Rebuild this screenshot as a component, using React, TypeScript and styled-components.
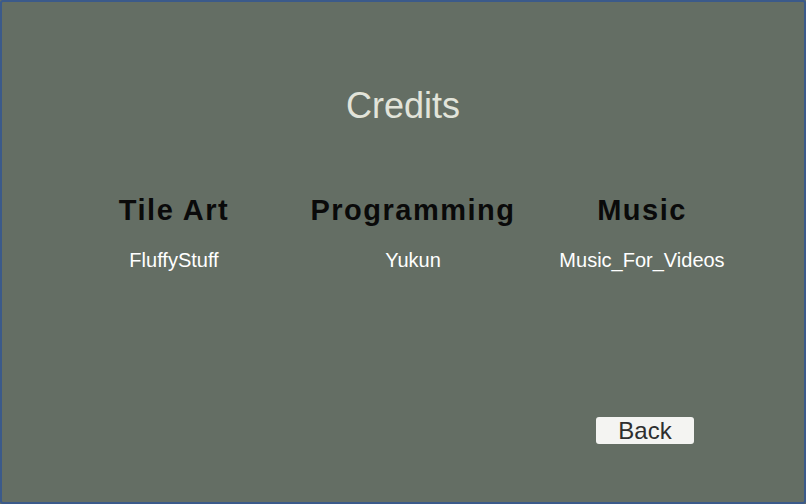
import React from 'react';
import styled, { createGlobalStyle } from 'styled-components';

const GlobalStyle = createGlobalStyle`
  html, body {
    margin: 0;
    padding: 0;
    background: #646e64;
  }
  * {
    box-sizing: border-box;
  }
`;

const credits = [
  { role: 'Tile Art', name: 'FluffyStuff' },
  { role: 'Programming', name: 'Yukun' },
  { role: 'Music', name: 'Music_For_Videos' },
];

const App: React.FC = () => (
  <>
    <GlobalStyle />
    <Screen>
      <Title>Credits</Title>
      <Columns>
        {credits.map((c) => (
          <Column key={c.role}>
            <Role>{c.role}</Role>
            <Name>{c.name}</Name>
          </Column>
        ))}
      </Columns>
      <ButtonRow>
        <BackButton type="button">Back</BackButton>
      </ButtonRow>
    </Screen>
  </>
);
export default App;

const Screen = styled.div`
  width: 806px;
  height: 504px;
  border: 2px solid #3b5a8a;
  border-radius: 3px;
  background: #646e64;
  padding-top: 83px;
  font-family: 'Liberation Sans', Arial, sans-serif;
  display: flex;
  flex-direction: column;
`;

const Title = styled.h1`
  margin: 0;
  text-align: center;
  font-size: 36px;
  font-weight: 400;
  line-height: normal;
  color: #e2e4da;
`;

const Columns = styled.div`
  margin-top: 67px;
  padding-left: 52px;
  display: grid;
  grid-template-columns: 240px 238px 220px;
`;

const Column = styled.div`
  display: flex;
  flex-direction: column;
  align-items: center;
  gap: 22px;
`;

const Role = styled.h2`
  margin: 0;
  font-size: 29px;
  font-weight: 700;
  letter-spacing: 1.5px;
  line-height: normal;
  color: #0a0a0a;
  white-space: nowrap;
`;

const Name = styled.div`
  font-size: 20px;
  line-height: normal;
  color: #ffffff;
  white-space: nowrap;
`;

const ButtonRow = styled.div`
  margin-top: 145px;
  padding-left: 594px;
  display: flex;
`;

const BackButton = styled.button`
  width: 98px;
  height: 27px;
  padding: 0;
  border: none;
  border-radius: 3px;
  background: #f4f4f2;
  color: #2e2e2e;
  font-family: 'Liberation Sans', Arial, sans-serif;
  font-size: 24px;
  line-height: 27px;
  cursor: pointer;
`;
